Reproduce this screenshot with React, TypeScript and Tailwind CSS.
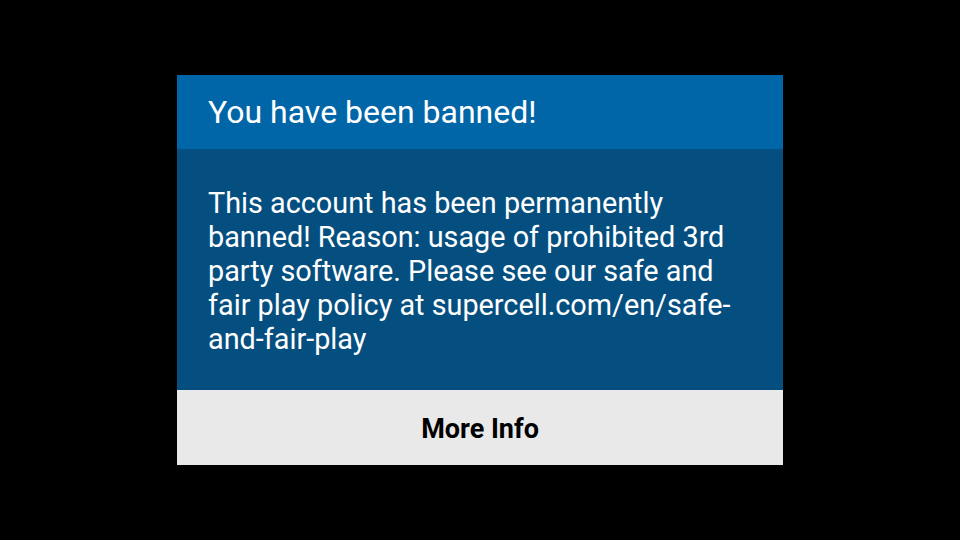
import * as React from 'react'

function BanDialog() {
  return (
    <div className="w-[606px] flex flex-col font-['Roboto',sans-serif]">
      <div className="h-[74px] bg-[#0166a8] flex items-center px-[31px]">
        <h1 className="text-[32px] text-white leading-none">You have been banned!</h1>
      </div>
      <div className="bg-[#054f80] pl-[31px] pr-[34px] pt-[37px] h-[241px]">
        <p className="text-[28.8px] leading-[34px] text-white">
          This account has been permanently banned! Reason: usage of prohibited 3rd party software. Please see our safe and fair play policy at supercell.com/en/safe-and-fair-play
        </p>
      </div>
      <button className="h-[75px] pt-[3px] bg-[#e9e9e9] flex items-center justify-center text-[27px] font-bold text-black">
        More Info
      </button>
    </div>
  )
}

export default function App() {
  return (
    <div className="w-[960px] h-[540px] bg-black flex justify-center pt-[75px]">
      <BanDialog />
    </div>
  )
}
